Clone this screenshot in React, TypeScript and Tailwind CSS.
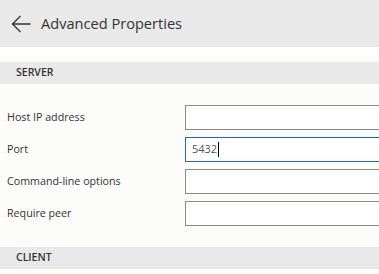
import React from 'react';

const font = { fontFamily: '"Segoe UI", "Open Sans", "Noto Sans", sans-serif' };

function Row({ label, value, focused }: { label: string; value?: string; focused?: boolean }) {
  return (
    <div className="flex h-[24px] items-center">
      <div className="w-[185px] shrink-0 pl-[7px] text-[10.7px] text-[#333]">{label}</div>
      <div
        className={
          'flex h-[25px] w-[230px] shrink-0 items-center border bg-white pl-[6px] text-[11px] text-[#555] ' +
          (focused ? 'border-[#1a6fbd]' : 'border-[#8a8a8a]')
        }
      >
        {value}
        {focused && <span className="ml-px h-[15px] w-px bg-black" />}
      </div>
    </div>
  );
}

function SectionBar({ title }: { title: string }) {
  return (
    <div className="flex h-[22px] items-center bg-[#e9e9e9] pl-[16px] text-[10.5px] font-semibold text-[#333]">
      {title}
    </div>
  );
}

export default function App() {
  return (
    <div className="h-[274px] w-[379px] overflow-hidden bg-[#fcfcfa]" style={font}>
      <div className="flex h-[47px] items-center bg-[#e9e9e9]">
        <svg width="20" height="18" viewBox="0 0 20 18" className="ml-[11px]" fill="none" stroke="#333" strokeWidth="1.3">
          <path d="M19.5 9H1.5M9.5 1L1.5 9l8 8" />
        </svg>
        <span className="ml-[10px] text-[14.6px] text-[#333]">Advanced Properties</span>
      </div>
      <div className="h-[9px] bg-white" />
      <div className="mt-[6px]">
        <SectionBar title="SERVER" />
      </div>
      <div className="mt-[21px] flex flex-col gap-[8px]">
        <Row label="Host IP address" />
        <Row label="Port" value="5432" focused />
        <Row label="Command-line options" />
        <Row label="Require peer" />
      </div>
      <div className="mt-[22px]">
        <SectionBar title="CLIENT" />
      </div>
    </div>
  );
}
